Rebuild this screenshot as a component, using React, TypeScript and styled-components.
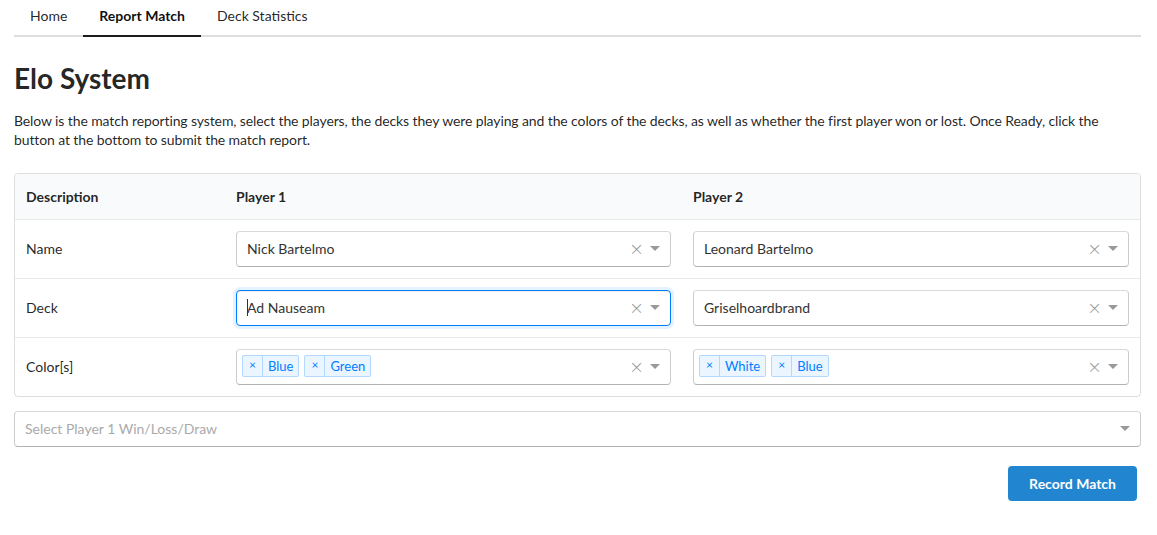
import React from 'react';
import styled, { createGlobalStyle } from 'styled-components';

const GlobalStyle = createGlobalStyle`
  body {
    margin: 0;
    background: #fff;
    font-family: Lato, 'Helvetica Neue', Arial, sans-serif;
    font-size: 14px;
    color: rgba(0, 0, 0, 0.87);
  }
  * {
    box-sizing: border-box;
  }
`;

type Chip = string;

const rows: { label: string; p1: string | Chip[]; p2: string | Chip[]; focus?: boolean }[] = [
  { label: 'Name', p1: 'Nick Bartelmo', p2: 'Leonard Bartelmo' },
  { label: 'Deck', p1: 'Ad Nauseam', p2: 'Griselhoardbrand', focus: true },
  { label: 'Color[s]', p1: ['Blue', 'Green'], p2: ['White', 'Blue'] },
];

const SelectBox: React.FC<{ value?: string | Chip[]; placeholder?: string; focused?: boolean; clearable?: boolean }> = ({
  value,
  placeholder,
  focused,
  clearable = true,
}) => {
  return (
    <Control $focused={focused}>
      <ValueArea>
        {Array.isArray(value) ? (
          <Chips>
            {value.map((c, i) => (
              <ValueChip key={i}>
                <ChipIcon>×</ChipIcon>
                <ChipLabel>{c}</ChipLabel>
              </ValueChip>
            ))}
          </Chips>
        ) : value ? (
          <SingleValue>
            {focused && <Caret />}
            {value}
          </SingleValue>
        ) : (
          <Placeholder>{placeholder}</Placeholder>
        )}
      </ValueArea>
      {clearable && <ClearZone>×</ClearZone>}
      <ArrowZone>
        <Arrow />
      </ArrowZone>
    </Control>
  );
};

const App: React.FC = () => {
  return (
    <Page>
      <GlobalStyle />
      <Menu>
        <Tab>Home</Tab>
        <Tab $active>Report Match</Tab>
        <Tab>Deck Statistics</Tab>
      </Menu>

      <Title>Elo System</Title>
      <Intro>
        Below is the match reporting system, select the players, the decks they were playing and the colors of the decks, as
        well as whether the first player won or lost. Once Ready, click the button at the bottom to submit the match report.
      </Intro>

      <Table>
        <HeadRow>
          <HeadCell>Description</HeadCell>
          <HeadCell>Player 1</HeadCell>
          <HeadCell>Player 2</HeadCell>
        </HeadRow>
        {rows.map((r) => (
          <Row key={r.label}>
            <Cell>{r.label}</Cell>
            <Cell>
              <SelectBox value={r.p1} focused={r.focus} />
            </Cell>
            <Cell>
              <SelectBox value={r.p2} />
            </Cell>
          </Row>
        ))}
      </Table>

      <ResultWrap>
        <SelectBox placeholder="Select Player 1 Win/Loss/Draw" clearable={false} />
      </ResultWrap>

      <Actions>
        <Button type="button">Record Match</Button>
      </Actions>
    </Page>
  );
};

export default App;

const Page = styled.div`
  padding: 0 16px 0 14px;
`;

const Menu = styled.div`
  display: flex;
  height: 37px;
  border-bottom: 2px solid rgba(34, 36, 38, 0.15);
`;

const Tab = styled.div<{ $active?: boolean }>`
  display: flex;
  align-items: center;
  height: 37px;
  padding: 0 16px 3px;
  margin-bottom: -2px;
  border-bottom: 2px solid ${(p) => (p.$active ? '#1b1c1d' : 'transparent')};
  font-size: 14px;
  line-height: 1;
  font-weight: ${(p) => (p.$active ? 700 : 400)};
  color: ${(p) => (p.$active ? 'rgba(0,0,0,.95)' : 'rgba(0,0,0,.87)')};
`;

const Title = styled.h1`
  margin: 25px 0 0;
  font-size: 28px;
  line-height: 1.2;
  font-weight: 700;
  color: rgba(0, 0, 0, 0.87);
`;

const Intro = styled.p`
  margin: 15px 0 24px;
  font-size: 14px;
  line-height: 19px;
  letter-spacing: -0.11px;
`;

const Table = styled.div`
  border: 1px solid rgba(34, 36, 38, 0.15);
  border-radius: 4px;
  overflow: hidden;
`;

const HeadRow = styled.div`
  display: grid;
  grid-template-columns: 210px 457px 1fr;
  background: #f9fafb;
  height: 45px;
  align-items: center;
`;

const HeadCell = styled.div`
  padding: 0 11px;
  font-weight: 700;
  font-size: 14px;
`;

const Row = styled.div`
  display: grid;
  grid-template-columns: 210px 457px 1fr;
  align-items: center;
  border-top: 1px solid rgba(34, 36, 38, 0.1);
  height: 59px;
`;

const Cell = styled.div`
  padding: 0 11px;
  font-size: 14px;
`;

const Control = styled.div<{ $focused?: boolean }>`
  display: flex;
  align-items: center;
  height: 36px;
  background: #fff;
  border: 1px solid ${(p) => (p.$focused ? '#007eff' : '#ccc')};
  border-color: ${(p) => (p.$focused ? '#007eff' : '#d9d9d9 #ccc #b3b3b3')};
  border-radius: 4px;
  box-shadow: ${(p) =>
    p.$focused ? 'inset 0 1px 1px rgba(0,0,0,.075), 0 0 0 3px rgba(0,126,255,.1)' : 'none'};
  color: #333;
`;

const ValueArea = styled.div`
  flex: 1;
  min-width: 0;
  height: 100%;
`;

const SingleValue = styled.div`
  display: flex;
  align-items: center;
  height: 100%;
  padding: 0 10px;
  font-size: 14px;
  color: #333;
`;

const Caret = styled.span`
  display: inline-block;
  width: 1px;
  height: 17px;
  background: #333;
  margin-right: -1px;
`;

const Placeholder = styled.div`
  display: flex;
  align-items: center;
  height: 100%;
  padding: 0 10px;
  color: #aaa;
  font-size: 14px;
`;

const Chips = styled.div`
  display: flex;
  align-items: flex-start;
  gap: 5px;
  padding: 5px 0 0 5px;
`;

const ValueChip = styled.div`
  display: flex;
  align-items: stretch;
  background: rgba(0, 126, 255, 0.08);
  border: 1px solid rgba(0, 126, 255, 0.24);
  border-radius: 2px;
  color: #007eff;
  font-size: 13px;
  line-height: 18px;
`;

const ChipIcon = styled.span`
  padding: 1px 6px 1px;
  border-right: 1px solid rgba(0, 126, 255, 0.24);
  font-size: 12px;
  line-height: 16px;
`;

const ChipLabel = styled.span`
  padding: 1px 5px;
`;

const ClearZone = styled.span`
  width: 17px;
  text-align: center;
  color: #999;
  font-size: 18px;
  line-height: 1;
  font-family: 'DejaVu Sans', sans-serif;
  font-weight: 300;
`;

const ArrowZone = styled.span`
  display: flex;
  justify-content: center;
  width: 25px;
  padding-right: 5px;
`;

const Arrow = styled.span`
  display: inline-block;
  width: 0;
  height: 0;
  border-style: solid;
  border-color: #999 transparent transparent;
  border-width: 5px 5px 2.5px;
  margin-top: 2px;
`;

const ResultWrap = styled.div`
  margin-top: 14px;
`;

const Actions = styled.div`
  display: flex;
  justify-content: flex-end;
  margin-top: 19px;
`;

const Button = styled.button`
  margin-right: 4px;
  height: 35px;
  padding: 0 21px;
  border: none;
  border-radius: 4px;
  background: #2185d0;
  color: #fff;
  font-family: Lato, 'Helvetica Neue', Arial, sans-serif;
  font-size: 14px;
  font-weight: 700;
`;
